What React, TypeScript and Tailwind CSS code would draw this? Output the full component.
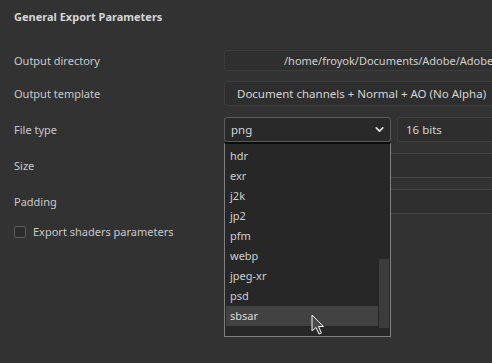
import { ChevronDown } from "lucide-react";

const fileTypes = ["hdr", "exr", "j2k", "jp2", "pfm", "webp", "jpeg-xr", "psd", "sbsar"];

function Row({ label, children, className }: { label: string; children?: React.ReactNode; className?: string }) {
  return (
    <div className={"flex items-center " + (className ?? "")}>
      <div className="w-[224px] shrink-0 pl-[14px]">{label}</div>
      <div className="flex-1 flex h-full gap-[6px]">{children}</div>
    </div>
  );
}

export default function App() {
  return (
    <div
      className="relative w-[492px] h-[363px] overflow-hidden bg-[#323232] text-[11px] leading-[14px] text-[#c9c9c9]"
      style={{ fontFamily: '"Noto Sans", "Open Sans", sans-serif' }}
    >
      <div className="pl-[14px] pt-[10px] font-bold text-[#d6d6d6]">General Export Parameters</div>

      <div className="mt-[26px] flex flex-col">
        {/* Output directory */}
        <Row label="Output directory" className="h-[21px]">
          <div className="flex-1 -mr-[10px] flex items-center pl-[59px] text-[11px] whitespace-nowrap overflow-hidden rounded-l-[3px] border border-[#3c3c3c] bg-[#2f2f2f] text-[#d0d0d0]">
            /home/froyok/Documents/Adobe/Adobe
          </div>
        </Row>

        {/* Output template */}
        <Row label="Output template" className="h-[25px] mt-[10px]">
          <div className="flex-1 -mr-[10px] flex items-center pl-[12px] text-[11.5px] whitespace-nowrap overflow-hidden rounded-l-[3px] border border-[#3e3e3e] bg-[#2e2e2e] text-[#d4d4d4]">
            Document channels + Normal + AO (No Alpha)
          </div>
        </Row>

        {/* File type */}
        <Row label="File type" className="h-[25px] mt-[11px]">
          <div className="w-[167px] shrink-0 flex items-center justify-between pl-[6px] pr-[4px] text-[11.5px] rounded-[3px] border border-[#5a5a5a] bg-[#292929] text-[#d4d4d4]">
            <span>png</span>
            <ChevronDown size={13} strokeWidth={3} className="text-[#e6e6e6]" />
          </div>
          <div className="flex-1 -mr-[10px] flex items-center pl-[8px] text-[11.5px] rounded-l-[3px] border border-[#3e3e3e] bg-[#2e2e2e] text-[#d4d4d4]">
            16 bits
          </div>
        </Row>

        {/* Size */}
        <Row label="Size" className="h-[25px] mt-[11px]">
          <div className="flex-1 flex items-center pl-[160px] text-[11.5px] whitespace-nowrap overflow-hidden border-y border-[#454545] bg-[#2f2f2f] text-[#d0d0d0]">
            e
          </div>
        </Row>

        {/* Padding */}
        <Row label="Padding" className="h-[25px] mt-[11px]">
          <div className="flex-1 border-y border-[#454545] bg-[#2f2f2f]" />
        </Row>

        {/* Export shaders parameters */}
        <div className="mt-[11px] flex items-center gap-[7px] pl-[14px]">
          <div className="w-[12px] h-[12px] rounded-[2px] border border-[#5c5c5c] bg-[#2c2c2c]" />
          <span>Export shaders parameters</span>
        </div>
      </div>

      {/* File type popup */}
      <div className="absolute left-[224px] top-[142px] w-[167px] h-[195px] border border-[#808080] border-t-2 border-t-[#0c0c0c] bg-[#272727] text-[#cfcfcf] flex pt-[2px] pl-[1px] pr-[1px] pb-[8px]">
        <div className="flex-1 flex flex-col">
          {fileTypes.map((t) => (
            <div
              key={t}
              className={
                "h-[20px] flex items-center pl-[4px] " + (t === "sbsar" ? "bg-[#424242] text-[#dcdcdc]" : "")
              }
            >
              {t}
            </div>
          ))}
        </div>
        <div className="w-[10px] ml-[1px] flex flex-col justify-end">
          <div className="h-[69px] bg-[#3c3c3c]" />
        </div>
      </div>

      {/* Mouse cursor */}
      <svg className="absolute left-[311px] top-[314px]" width="14" height="22" viewBox="0 0 14 22">
        <path
          d="M1 1 L1 17 L5 13.5 L8 20 L10.5 19 L7.5 12.5 L12.5 12.5 Z"
          fill="#4a4a4a"
          stroke="#f2f2f2"
          strokeWidth="1"
          strokeLinejoin="miter"
        />
      </svg>
    </div>
  );
}
